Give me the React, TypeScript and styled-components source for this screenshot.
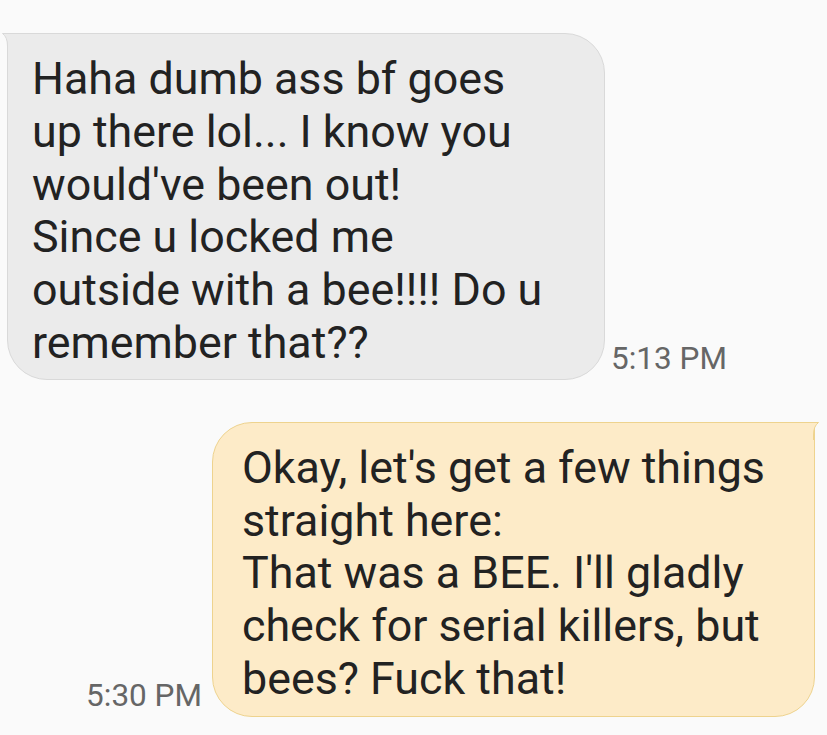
import React from "react";
import styled, { createGlobalStyle } from "styled-components";

const Global = createGlobalStyle`
  html, body { margin: 0; padding: 0; background: #fafafa; }
  body { font-family: Roboto, "Noto Sans", Arial, sans-serif; }
`;

const Thread = styled.div`
  display: flex;
  flex-direction: column;
  gap: 42px;
  padding-top: 33px;
  width: 827px;
  height: 735px;
  box-sizing: border-box;
  overflow: hidden;
`;

const Row = styled.div<{ $out?: boolean }>`
  display: flex;
  align-items: flex-end;
  flex-direction: ${(p) => (p.$out ? "row-reverse" : "row")};
  gap: ${(p) => (p.$out ? 10 : 6)}px;
  padding: ${(p) => (p.$out ? "0 12px 0 0" : "0 0 0 7px")};
`;

const Bubble = styled.div<{ $out?: boolean; $w: number }>`
  position: relative;
  box-sizing: border-box;
  width: ${(p) => p.$w}px;
  background: ${(p) => (p.$out ? "#fdebc8" : "#ebebeb")};
  border: 1px solid ${(p) => (p.$out ? "#eed38e" : "#d9d9d9")};
  border-radius: ${(p) => (p.$out ? "40px 0 40px 40px" : "0 40px 40px 40px")};
  padding: ${(p) => (p.$out ? "19px 10px 10px 29px" : "19px 10px 9px 24px")};
  color: #222;
  font-size: 44.8px;
  line-height: 52.8px;
  white-space: pre-line;
`;

const Tail = styled.svg<{ $out?: boolean }>`
  position: absolute;
  top: -1px;
  ${(p) => (p.$out ? "right: -5px; transform: scaleX(-1);" : "left: -6px;")}
  width: 12px;
  height: 18px;
  overflow: visible;
`;

const Time = styled.div`
  font-size: 31.5px;
  color: #666;
  white-space: nowrap;
  margin-bottom: 3px;
`;

function BubbleTail({ out }: { out?: boolean }) {
  const fill = out ? "#fdebc8" : "#ebebeb";
  const stroke = out ? "#eed38e" : "#d9d9d9";
  return (
    <Tail $out={out} viewBox="0 0 12 18">
      <path d="M0.5 0.5 H12 V18 H5.5 V13 Q5.5 4 0.5 0.5 Z" fill={fill} />
      <path d="M12 0.5 H0.5 Q5.5 4 5.5 13 V18" fill="none" stroke={stroke} strokeWidth="1" />
    </Tail>
  );
}

const messages = [
  {
    out: false,
    w: 598,
    time: "5:13 PM",
    text: "Haha dumb ass bf goes\nup there lol... I know you\nwould've been out!\nSince u locked me\noutside with a bee!!!! Do u\nremember that??",
  },
  {
    out: true,
    w: 603,
    time: "5:30 PM",
    text: "Okay, let's get a few things\nstraight here:\nThat was a BEE. I'll gladly\ncheck for serial killers, but\nbees? Fuck that!",
  },
];

export default function App() {
  return (
    <>
      <Global />
      <Thread>
        {messages.map((m, i) => (
          <Row key={i} $out={m.out}>
            <Bubble $out={m.out} $w={m.w}>
              <BubbleTail out={m.out} />
              {m.text}
            </Bubble>
            <Time>{m.time}</Time>
          </Row>
        ))}
      </Thread>
    </>
  );
}
